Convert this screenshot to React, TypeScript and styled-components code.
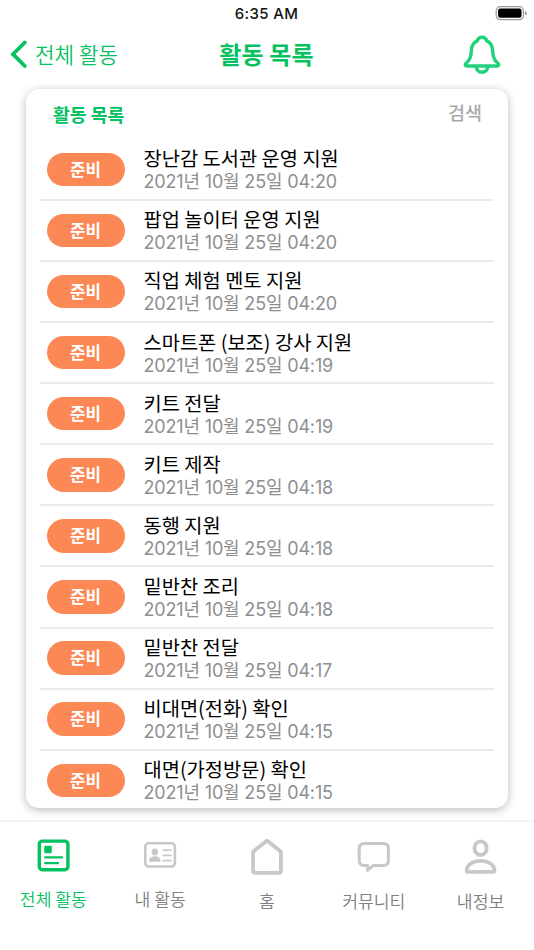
import React from "react";
import styled, { createGlobalStyle } from "styled-components";

const GREEN = "#06c15f";

const GlobalStyle = createGlobalStyle`
  * { box-sizing: border-box; }
  body {
    margin: 0;
    background: #fff;
    font-family: Inter, "Noto Sans CJK KR", sans-serif;
    -webkit-font-smoothing: antialiased;
  }
`;

const Screen = styled.div`
  width: 534px;
  height: 950px;
  overflow: hidden;
  display: flex;
  flex-direction: column;
  background: #fff;
`;

const StatusBar = styled.div`
  height: 28px;
  flex: none;
  display: grid;
  grid-template-columns: 1fr auto 1fr;
  align-items: center;
  padding: 0 7px 0 6px;
  svg { justify-self: end; }
`;

const Clock = styled.span`
  grid-column: 2;
  font-size: 15px;
  line-height: 28px;
  font-weight: 550;
  letter-spacing: 0.35px;
  color: #111;
`;

const Header = styled.header`
  height: 61px;
  flex: none;
  display: grid;
  grid-template-columns: 1fr auto 1fr;
  align-items: center;
  padding: 0 33px 9px 10px;
`;

const Back = styled.button`
  display: flex;
  align-items: center;
  gap: 8px;
  padding: 0;
  border: 0;
  background: none;
  color: ${GREEN};
  font: 350 21.3px/28px "Noto Sans CJK KR", sans-serif;
`;

const Title = styled.h1`
  margin: 0 0 0 22px;
  color: ${GREEN};
  font: 700 24px/30px "Noto Sans CJK KR", sans-serif;
  letter-spacing: 0.1px;
`;

const Bell = styled.svg`
  justify-self: end;
  margin-top: 1px;
`;

const Card = styled.main`
  height: 719px;
  flex: none;
  margin: 0 26px 12px;
  border-radius: 13px;
  background: #fff;
  overflow: hidden;
  box-shadow: 0 2px 10px rgba(0, 0, 0, 0.27);
`;

const CardHead = styled.div`
  height: 50.8px;
  display: flex;
  align-items: center;
  justify-content: space-between;
  padding: 0 26px 0 27px;
`;

const CardTitle = styled.h2`
  margin: -1px 0 0;
  color: ${GREEN};
  font: 700 18.3px/24px "Noto Sans CJK KR", sans-serif;
`;

const Search = styled.span`
  margin-top: -4px;
  color: #aaaaad;
  font: 500 18.5px/24px "Noto Sans CJK KR", sans-serif;
`;

const List = styled.ul`
  margin: 0 14px;
  padding: 0;
  list-style: none;
`;

const Row = styled.li`
  height: 61.1px;
  display: flex;
  align-items: center;
  gap: 19px;
  padding-left: 6.5px;
  border-bottom: 2px solid #ebebec;
`;

const Badge = styled.span`
  width: 78px;
  height: 33.5px;
  flex: none;
  border-radius: 17px;
  background: #fb8855;
  color: #fff;
  text-align: center;
  font: 700 16.8px/33px "Noto Sans CJK KR", sans-serif;
`;

const Info = styled.div`
  display: flex;
  flex-direction: column;
  padding-top: 1.8px;
  white-space: nowrap;
`;

const Name = styled.span`
  color: #000;
  font: 400 19.8px/24px "Noto Sans CJK KR", sans-serif;
`;

const Time = styled.span`
  color: #8e8e92;
  font-size: 18px;
  line-height: 24px;
  letter-spacing: -0.17px;
`;

const TabBar = styled.nav`
  flex: 1;
  display: grid;
  grid-template-columns: repeat(5, 1fr);
  border-top: 2px solid #f3f3f4;
  background: #fff;
`;

const Tab = styled.button<{ $active?: boolean; $drop: number }>`
  display: flex;
  flex-direction: column;
  align-items: center;
  padding: 12px 0 0;
  border: 0;
  background: none;
  color: ${(p) => (p.$active ? GREEN : "#c7c7cc")};
  svg { display: block; }
  span {
    margin-top: ${(p) => p.$drop}px;
    color: ${(p) => (p.$active ? GREEN : "#808083")};
    font: 350 17.2px/24px "Noto Sans CJK KR", sans-serif;
    white-space: nowrap;
  }
`;

const NewsIcon = () => (
  <svg width="44" height="44" viewBox="0 0 44 44" fill="none" stroke="currentColor">
    <rect x="8.3" y="7.1" width="28.6" height="28.6" rx="3" strokeWidth="3.4" />
    <rect x="13.2" y="11.7" width="7.6" height="7.6" rx="1.3" fill="currentColor" stroke="none" />
    <path d="M14.2 23.4H31M14.2 29.2H27" strokeWidth="2.3" strokeLinecap="round" />
  </svg>
);

const IdIcon = () => (
  <svg width="44" height="44" viewBox="0 0 44 44" fill="none" stroke="currentColor">
    <rect x="7.3" y="9.3" width="29.6" height="23.2" rx="3.4" strokeWidth="2.6" />
    <ellipse cx="16.8" cy="18" rx="3.2" ry="3.6" fill="currentColor" stroke="none" />
    <path d="M11 27c0-3 2.7-4.7 5.8-4.7s5.8 1.7 5.8 4.7q0 .8-1 .8H12q-1 0-1-.8Z" fill="currentColor" stroke="none" />
    <path d="M25.3 16.2h7.5M25.3 21.4h7.5M25.3 26.7h7.5" strokeWidth="1.8" strokeLinecap="round" />
  </svg>
);

const HomeIcon = () => (
  <svg width="44" height="44" viewBox="0 0 44 44" fill="none" stroke="currentColor">
    <path d="M8.1 18.6q0-1 .8-1.7L20.8 7.4q1.2-.9 2.4 0l11.9 9.5q.8.7.8 1.7V36.8q0 2-2 2H10.1q-2 0-2-2Z" strokeWidth="3.8" strokeLinejoin="round" />
  </svg>
);

const ChatIcon = () => (
  <svg width="44" height="44" viewBox="0 0 44 44" fill="none" stroke="currentColor">
    <path d="M12.2 9.5h19.2q5 0 5 5v12q0 5-5 5H21.3l-5.6 5v-5h-3.5q-5 0-5-5v-12q0-5 5-5Z" strokeWidth="3" strokeLinejoin="round" />
  </svg>
);

const PersonIcon = () => (
  <svg width="44" height="44" viewBox="0 0 44 44" fill="none" stroke="currentColor" strokeWidth="3.7">
    <ellipse cx="21.6" cy="14.2" rx="6.1" ry="6.9" />
    <path d="M7.7 36.7c0-6 6.2-9.8 13.9-9.8s13.9 3.8 13.9 9.8q0 1.2-1.2 1.2H8.9q-1.2 0-1.2-1.2Z" />
  </svg>
);

const activities = [
  ["장난감 도서관 운영 지원", "04:20"],
  ["팝업 놀이터 운영 지원", "04:20"],
  ["직업 체험 멘토 지원", "04:20"],
  ["스마트폰 (보조) 강사 지원", "04:19"],
  ["키트 전달", "04:19"],
  ["키트 제작", "04:18"],
  ["동행 지원", "04:18"],
  ["밑반찬 조리", "04:18"],
  ["밑반찬 전달", "04:17"],
  ["비대면(전화) 확인", "04:15"],
  ["대면(가정방문) 확인", "04:15"],
];

const tabs = [
  { label: "전체 활동", Icon: NewsIcon, active: true, drop: 9 },
  { label: "내 활동", Icon: IdIcon, drop: 9 },
  { label: "홈", Icon: HomeIcon, drop: 11 },
  { label: "커뮤니티", Icon: ChatIcon, drop: 11 },
  { label: "내정보", Icon: PersonIcon, drop: 11 },
];

export default function App() {
  return (
    <Screen>
      <GlobalStyle />
      <StatusBar>
        <Clock>6:35 AM</Clock>
        <svg width="33" height="16" viewBox="0 0 33 16">
          <rect x="2.2" y="0.7" width="27.2" height="13" rx="4" fill="none" stroke="#999" strokeWidth="1.2" />
          <rect x="4.1" y="2.6" width="23.4" height="9.2" rx="2" fill="#000" />
          <path d="M31 5v4.5q1.8-.6 1.8-2.25T31 5Z" fill="#999" />
        </svg>
      </StatusBar>
      <Header>
        <Back>
          <svg width="17" height="28" viewBox="0 0 17 28" fill="none" stroke={GREEN} strokeWidth="3.8">
            <path d="M14.8 2.5 3 14.2l11.8 11.8" strokeLinecap="round" />
          </svg>
          전체 활동
        </Back>
        <Title>활동 목록</Title>
        <Bell width="38" height="40" viewBox="0 0 38 40" fill="none" stroke="#20d27b" strokeWidth="3.4" strokeLinejoin="round" strokeLinecap="round">
          <path d="M4 31q-2.1 0-1.6-1.7c.3-1 1.6-1.7 3-3.4 2.3-3 2.9-6 3-10.6.2-4.7 1.9-7.6 5.8-9.4.7-2.3 2.4-3.6 4.8-3.6s4.1 1.3 4.8 3.6c3.9 1.8 5.6 4.7 5.8 9.4.1 4.6.7 7.6 3 10.6 1.4 1.7 2.7 2.4 3 3.4q.5 1.7-1.6 1.7Z" />
          <path d="M13.3 32c.5 3.5 2.5 5.3 5.7 5.3s5.2-1.8 5.7-5.3" />
        </Bell>
      </Header>
      <Card>
        <CardHead>
          <CardTitle>활동 목록</CardTitle>
          <Search>검색</Search>
        </CardHead>
        <List>
          {activities.map(([name, time]) => (
            <Row key={name}>
              <Badge>준비</Badge>
              <Info>
                <Name>{name}</Name>
                <Time>2021년 10월 25일 {time}</Time>
              </Info>
            </Row>
          ))}
        </List>
      </Card>
      <TabBar>
        {tabs.map(({ label, Icon, active, drop }) => (
          <Tab key={label} $active={active} $drop={drop}>
            <Icon />
            <span>{label}</span>
          </Tab>
        ))}
      </TabBar>
    </Screen>
  );
}
